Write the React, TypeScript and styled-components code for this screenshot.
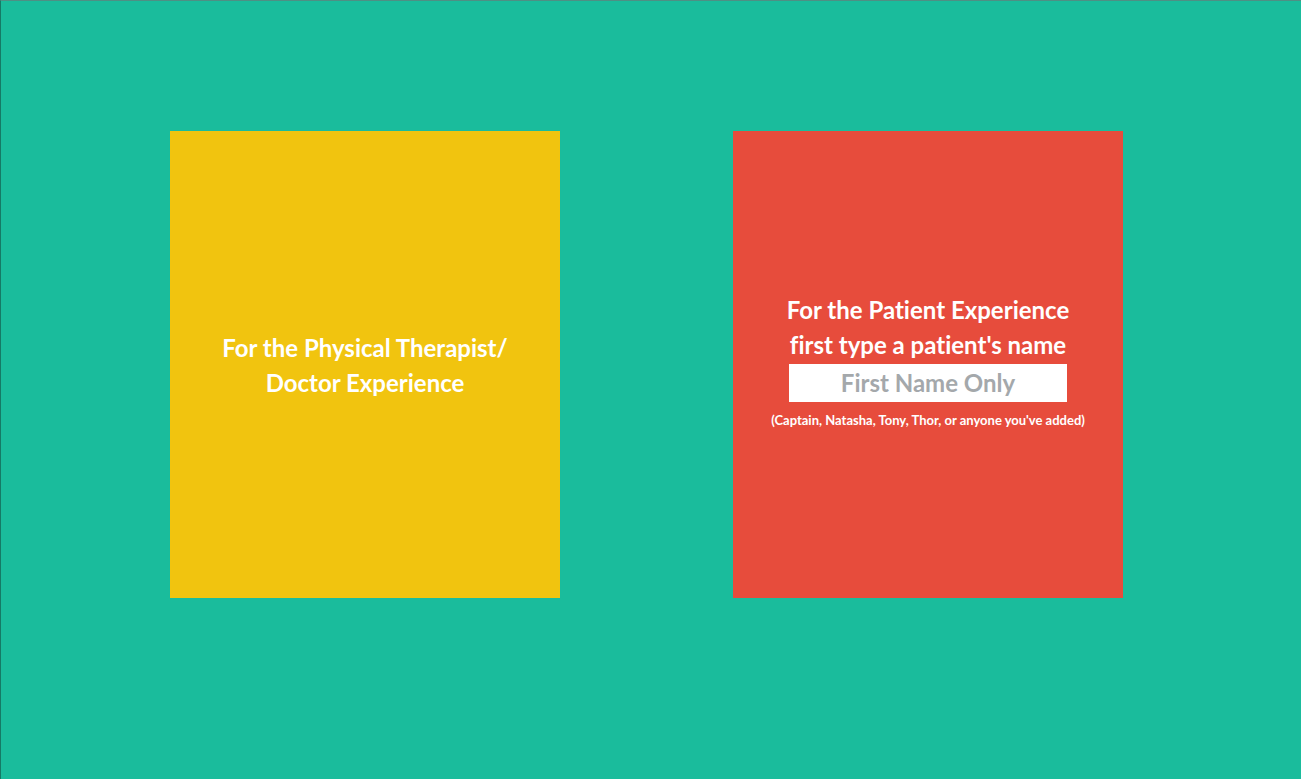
import React from "react";
import styled, { createGlobalStyle } from "styled-components";

const GlobalStyle = createGlobalStyle`
    html, body {
        margin: 0;
        padding: 0;
        height: 100%;
    }
    body {
        font-family: Lato, "Noto Sans", sans-serif;
        font-variant-ligatures: none;
        background: #1abc9c;
    }
`;

const Page = styled.div`
    box-sizing: border-box;
    width: 100%;
    height: 779px;
    background: #1abc9c;
    border-top: 1px solid #4f8f84;
    border-left: 1px solid #157a66;
    display: flex;
    align-items: flex-start;
    padding: 130px 0 0 169px;
    gap: 173px;
`;

const Card = styled.div<{ $color: string }>`
    width: 390px;
    height: 467px;
    background: ${(p) => p.$color};
    display: flex;
    flex-direction: column;
    align-items: center;
    justify-content: center;
    color: #fff;
    text-align: center;
`;

const Title = styled.div`
    font-size: 24px;
    font-weight: 700;
    line-height: 35px;
`;

const PatientForm = styled.div`
    display: flex;
    flex-direction: column;
    align-items: center;
    margin-bottom: 10px;
`;

const NameInput = styled.input`
    box-sizing: border-box;
    width: 278px;
    height: 38px;
    border: none;
    outline: none;
    background: #fff;
    font-family: Lato, "Noto Sans", sans-serif;
    font-variant-ligatures: none;
    font-size: 24px;
    font-weight: 700;
    text-align: center;
    color: #555;
    padding: 0;
    margin-top: 2px;

    &::placeholder {
        color: #a4a8ab;
    }
`;

const Hint = styled.div`
    font-size: 13px;
    font-weight: 700;
    margin-top: 10px;
    line-height: 16px;
`;

export default function App() {
    return (
        <>
            <GlobalStyle />
            <Page>
                <Card $color="#f1c40f">
                    <Title>
                        For the Physical Therapist/
                        <br />
                        Doctor Experience
                    </Title>
                </Card>
                <Card $color="#e74c3c">
                    <PatientForm>
                        <Title>
                            For the Patient Experience
                            <br />
                            first type a patient's name
                        </Title>
                        <NameInput placeholder="First Name Only" />
                        <Hint>(Captain, Natasha, Tony, Thor, or anyone you've added)</Hint>
                    </PatientForm>
                </Card>
            </Page>
        </>
    );
}
